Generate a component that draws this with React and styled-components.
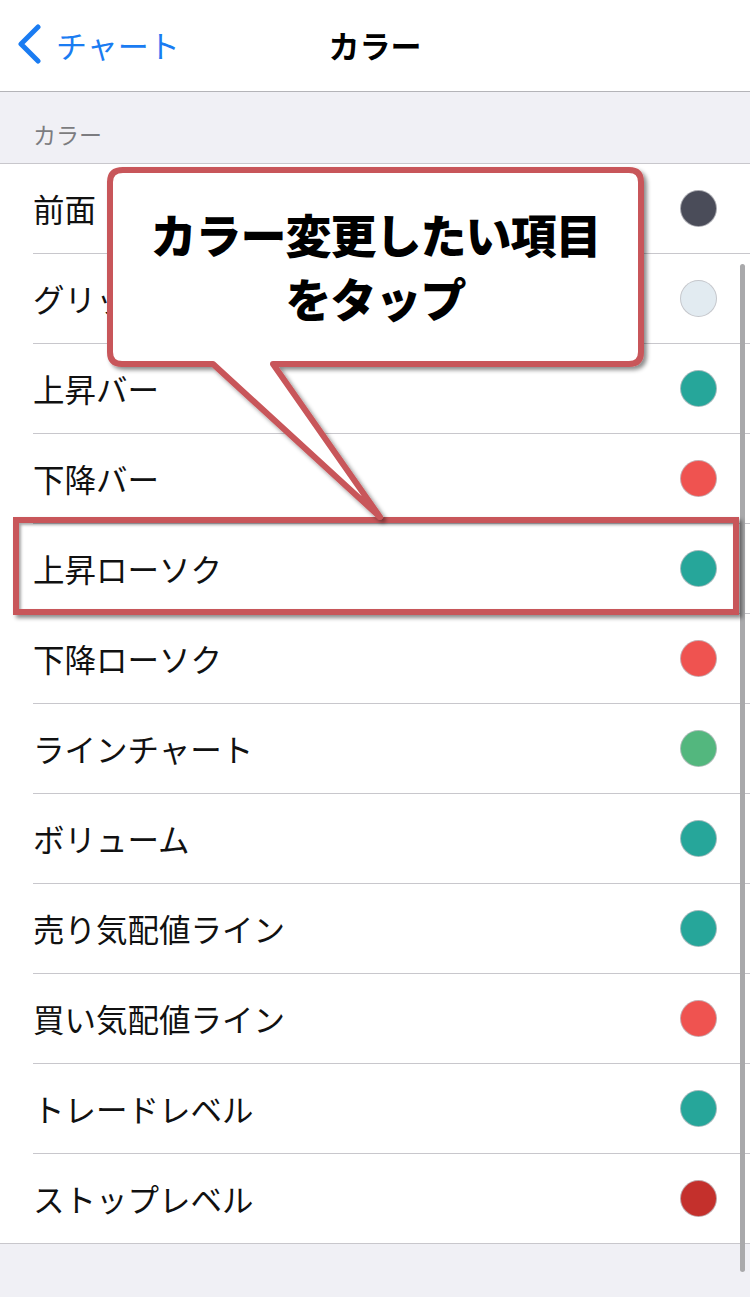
import React from "react";
import styled, { createGlobalStyle } from "styled-components";

const GlobalStyle = createGlobalStyle`
  html, body { margin: 0; padding: 0; background: #f0f0f5; }
  body { font-family: "Noto Sans CJK JP", "Noto Sans", sans-serif; -webkit-font-smoothing: antialiased; }
  * { box-sizing: border-box; }
`;

const Page = styled.div`
  position: relative;
  width: 750px;
  height: 1297px;
  overflow: hidden;
  background: #f0f0f5;
`;

const NavBar = styled.header`
  height: 92px;
  background: #ffffff;
  border-bottom: 1px solid #b4b4b8;
  display: grid;
  grid-template-columns: 1fr auto 1fr;
  align-items: center;
`;

const BackButton = styled.div`
  display: flex;
  align-items: center;
  gap: 14px;
  padding-left: 16px;
  color: #1a7cf2;
  font-size: 31px;
  line-height: 1;
  margin-top: -2px;
`;

const NavTitle = styled.h1`
  margin: 0 0 2px;
  font-size: 31px;
  font-weight: 700;
  color: #000;
  line-height: 1;
`;

const SectionHeader = styled.div`
  height: 72px;
  padding: 12px 33px 0;
  display: flex;
  align-items: center;
  font-size: 23px;
  color: #7c7c80;
  border-bottom: 1px solid #c8c7cc;
`;

const List = styled.ul`
  list-style: none;
  margin: 0;
  padding: 0;
  background: #ffffff;
  border-bottom: 1px solid #c8c7cc;
`;

const Row = styled.li`
  height: 90px;
  margin-left: 33px;
  padding-right: 33px;
  display: flex;
  align-items: center;
  justify-content: space-between;
  border-bottom: 1px solid #c8c7cc;
  &:last-child { border-bottom: none; height: 89px; }
`;

const Label = styled.span`
  font-size: 31.5px;
  color: #111;
  line-height: 1;
`;

const Swatch = styled.span`
  width: 37px;
  height: 37px;
  border-radius: 50%;
  background: ${(p) => p.$color};
  border: 1.5px solid rgba(190, 190, 195, 0.8);
`;

const ScrollBar = styled.div`
  position: absolute;
  right: 5px;
  top: 264px;
  width: 5px;
  height: 1008px;
  border-radius: 3px;
  background: #a9a9ab;
`;

const Highlight = styled.div`
  position: absolute;
  left: 13px;
  top: 517px;
  width: 726px;
  height: 98px;
  border: 6px solid #c8565a;
  box-shadow: 3px 3px 4px rgba(0, 0, 0, 0.45), inset 2px 2px 3px rgba(0, 0, 0, 0.35);
  pointer-events: none;
`;

const Callout = styled.div`
  position: absolute;
  left: 0;
  top: 0;
  width: 750px;
  height: 540px;
  pointer-events: none;
`;

const CalloutShape = styled.svg`
  position: absolute;
  left: 0;
  top: 0;
`;

const CalloutText = styled.div`
  position: absolute;
  left: 107px;
  top: 167px;
  width: 537px;
  height: 198px;
  display: flex;
  flex-direction: column;
  align-items: center;
  justify-content: center;
  font-size: 46px;
  font-weight: 900;
  line-height: 64px;
  color: #000;
  letter-spacing: -1px;
  padding-bottom: 2px;
`;

const rows = [
  ["前面", "#4a4c59"],
  ["グリッド", "#e2ebf1"],
  ["上昇バー", "#26a69a"],
  ["下降バー", "#ef5350"],
  ["上昇ローソク", "#26a69a"],
  ["下降ローソク", "#ef5350"],
  ["ラインチャート", "#53b77e"],
  ["ボリューム", "#26a69a"],
  ["売り気配値ライン", "#26a69a"],
  ["買い気配値ライン", "#ef5350"],
  ["トレードレベル", "#26a69a"],
  ["ストップレベル", "#c4302c"],
];

export default function App() {
  return (
    <Page>
      <GlobalStyle />
      <NavBar>
        <BackButton>
          <svg width="26" height="42" viewBox="0 0 26 42">
            <path d="M22 3 L5 20 L22 37" fill="none" stroke="#1a7cf2" strokeWidth="5" strokeLinecap="round" strokeLinejoin="round" />
          </svg>
          <span>チャート</span>
        </BackButton>
        <NavTitle>カラー</NavTitle>
        <div />
      </NavBar>
      <SectionHeader>カラー</SectionHeader>
      <List>
        {rows.map(([label, color]) => (
          <Row key={label}>
            <Label>{label}</Label>
            <Swatch $color={color} />
          </Row>
        ))}
      </List>
      <ScrollBar />
      <Highlight />
      <Callout>
        <CalloutShape width="750" height="540" viewBox="0 0 750 540">
          <defs>
            <filter id="shadow" x="-10%" y="-10%" width="130%" height="130%">
              <feDropShadow dx="3" dy="3" stdDeviation="2" floodColor="#000" floodOpacity="0.45" />
            </filter>
          </defs>
          <path
            d="M123 170 H629 Q641 170 641 182 V352 Q641 364 629 364 H273 L380 517 L213 364 H122 Q110 364 110 352 V182 Q110 170 123 170 Z"
            fill="#ffffff"
            stroke="#c8565a"
            strokeWidth="6"
            strokeLinejoin="round"
            filter="url(#shadow)"
          />
        </CalloutShape>
        <CalloutText>
          <span>カラー変更したい項目</span>
          <span>をタップ</span>
        </CalloutText>
      </Callout>
    </Page>
  );
}
